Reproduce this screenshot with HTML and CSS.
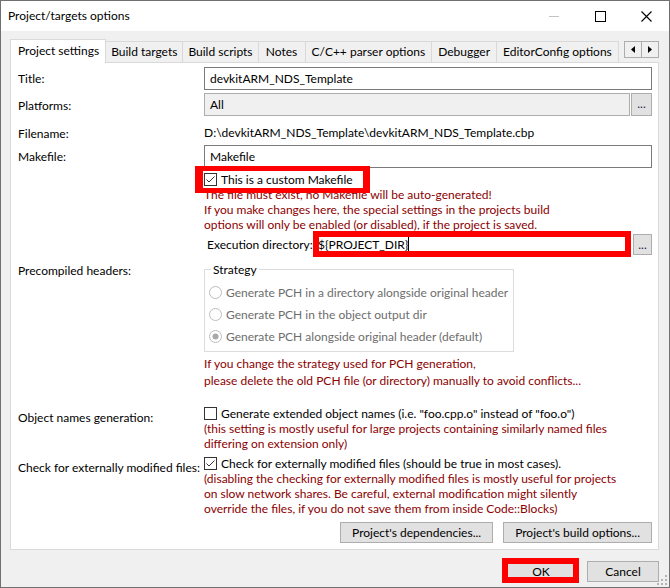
FILE: index.html
```html
<!DOCTYPE html>
<html>
<head>
<meta charset="utf-8">
<title>Project/targets options</title>
<link rel="stylesheet" href="styles.css">
</head>
<body>
<div class="window">
  <div class="titlebar">
    <span class="title">Project/targets options</span>
    <div class="caption">
      <span class="cap"><svg width="10" height="10" viewBox="0 0 10 10"><rect x="0" y="5" width="10" height="1" fill="#c4c4c4"/></svg></span>
      <span class="cap"><svg width="11" height="11" viewBox="0 0 11 11"><rect x="0.5" y="0.5" width="10" height="10" fill="none" stroke="#000"/></svg></span>
      <span class="cap"><svg width="11" height="11" viewBox="0 0 11 11"><path d="M0.5 0.5L10.5 10.5M10.5 0.5L0.5 10.5" stroke="#000" stroke-width="1.1"/></svg></span>
    </div>
  </div>

  <div class="client">
    <div class="tabs">
      <div class="tab active">Project settings</div>
      <div class="tab">Build targets</div>
      <div class="tab">Build scripts</div>
      <div class="tab">Notes</div>
      <div class="tab wide">C/C++ parser options</div>
      <div class="tab wide">Debugger</div>
      <div class="tab wide">EditorConfig options</div>
      <div class="tab-scroll">
        <span class="arrow"><svg width="4" height="7" viewBox="0 0 4 7"><path d="M4 0L0 3.5L4 7Z" fill="#000"/></svg></span>
        <span class="arrow"><svg width="4" height="7" viewBox="0 0 4 7"><path d="M0 0L4 3.5L0 7Z" fill="#000"/></svg></span>
      </div>
    </div>

    <div class="panel">
      <div class="row r1">
        <div class="lbl">Title:</div>
        <div class="input">devkitARM_NDS_Template</div>
      </div>
      <div class="row r2">
        <div class="lbl">Platforms:</div>
        <div class="combo">
          <div class="choice">All</div>
          <div class="dots">...</div>
        </div>
      </div>
      <div class="row r3">
        <div class="lbl">Filename:</div>
        <div class="static">D:\devkitARM_NDS_Template\devkitARM_NDS_Template.cbp</div>
      </div>
      <div class="row r4">
        <div class="lbl">Makefile:</div>
        <div class="input">Makefile</div>
      </div>
      <div class="row r5">
        <div class="lbl"></div>
        <div class="fld">
          <div class="check marked">
            <svg class="box" width="13" height="13" viewBox="0 0 13 13"><rect x="0.5" y="0.5" width="12" height="12" fill="#fff" stroke="#333"/><path d="M2.5 6.5L5 9L10.5 3.5" fill="none" stroke="#333"/></svg>
            <span>This is a custom Makefile</span>
            <span class="mark mark-check"></span>
          </div>
        </div>
      </div>
      <div class="row r6">
        <div class="lbl"></div>
        <div class="fld note">The file must exist, no Makefile will be auto-generated!<br>If you make changes here, the special settings in the projects build<br>options will only be enabled (or disabled), if the project is saved.</div>
      </div>
      <div class="row r7">
        <div class="lbl"></div>
        <div class="fld exec">
          <span class="exec-lbl">Execution directory:</span>
          <div class="input exec-input">${PROJECT_DIR}<span class="caret"></span><span class="mark mark-exec"></span></div>
          <div class="dots small">...</div>
        </div>
      </div>
      <div class="row r8">
        <div class="lbl top">Precompiled headers:</div>
        <div class="fld">
          <fieldset class="group">
            <legend>Strategy</legend>
            <div class="radio"><svg width="13" height="13" viewBox="0 0 13 13"><circle cx="6.5" cy="6.5" r="6" fill="#fff" stroke="#bcbcbc"/></svg><span>Generate PCH in a directory alongside original header</span></div>
            <div class="radio"><svg width="13" height="13" viewBox="0 0 13 13"><circle cx="6.5" cy="6.5" r="6" fill="#fff" stroke="#bcbcbc"/></svg><span>Generate PCH in the object output dir</span></div>
            <div class="radio"><svg width="13" height="13" viewBox="0 0 13 13"><circle cx="6.5" cy="6.5" r="6" fill="#fff" stroke="#bcbcbc"/><circle cx="6.5" cy="6.5" r="3" fill="#a8a8a8"/></svg><span>Generate PCH alongside original header (default)</span></div>
          </fieldset>
          <div class="note pch">If you change the strategy used for PCH generation,<br>please delete the old PCH file (or directory) manually to avoid conflicts...</div>
        </div>
      </div>
      <div class="row r9">
        <div class="lbl top2">Object names generation:</div>
        <div class="fld">
          <div class="check">
            <svg class="box" width="13" height="13" viewBox="0 0 13 13"><rect x="0.5" y="0.5" width="12" height="12" fill="#fff" stroke="#333"/></svg>
            <span>Generate extended object names (i.e. "foo.cpp.o" instead of "foo.o")</span>
          </div>
          <div class="note">(this setting is mostly useful for large projects containing similarly named files<br>differing on extension only)</div>
        </div>
      </div>
      <div class="row r10">
        <div class="lbl top2">Check for externally modified files:</div>
        <div class="fld">
          <div class="check">
            <svg class="box" width="13" height="13" viewBox="0 0 13 13"><rect x="0.5" y="0.5" width="12" height="12" fill="#fff" stroke="#333"/><path d="M2.5 6.5L5 9L10.5 3.5" fill="none" stroke="#333"/></svg>
            <span>Check for externally modified files (should be true in most cases).</span>
          </div>
          <div class="note">(disabling the checking for externally modified files is mostly useful for projects<br>on slow network shares. Be careful, external modification might silently<br>override the files, if you do not save them from inside Code::Blocks)</div>
        </div>
      </div>
      <div class="panel-buttons">
        <div class="btn">Project's dependencies...</div>
        <div class="btn">Project's build options...</div>
      </div>
    </div>

    <div class="footer">
      <div class="btn dlg ok">OK<span class="mark mark-ok"></span></div>
      <div class="btn dlg">Cancel</div>
    </div>
  </div>

  <svg class="grip" width="10" height="10" viewBox="0 0 10 10">
    <rect x="8" y="0" width="2" height="2" fill="#b4b4b4"/>
    <rect x="4" y="4" width="2" height="2" fill="#b4b4b4"/>
    <rect x="8" y="4" width="2" height="2" fill="#b4b4b4"/>
    <rect x="0" y="8" width="2" height="2" fill="#b4b4b4"/>
    <rect x="4" y="8" width="2" height="2" fill="#b4b4b4"/>
    <rect x="8" y="8" width="2" height="2" fill="#b4b4b4"/>
  </svg>
</div>
</body>
</html>
```

FILE: styles.css
```css
* { box-sizing: border-box; }
html, body { margin: 0; padding: 0; }
body {
  font-family: Lato, "Liberation Sans", sans-serif;
  font-size: 12px;
  color: #000;
  background: #fff;
}

.window {
  position: relative;
  width: 670px;
  height: 588px;
  border: 1px solid #707070;
  background: #f0f0f0;
  display: flex;
  flex-direction: column;
}

/* title bar */
.titlebar {
  height: 30px;
  flex: none;
  background: #fff;
  display: flex;
  align-items: center;
  padding-left: 7px;
}
.title { flex: 1; line-height: 30px; }
.caption { display: flex; height: 30px; }
.cap {
  width: 46px;
  height: 30px;
  display: flex;
  align-items: center;
  justify-content: center;
}

.client { padding: 8px 10px 0 9px; }

/* tabs */
.tabs {
  display: flex;
  align-items: flex-end;
  height: 23px;
}
.tab {
  height: 21px;
  min-width: 47px;
  line-height: 20px;
  padding: 0 5px;
  text-align: center;
  border-top: 1px solid #d9d9d9;
  border-right: 1px solid #d9d9d9;
  background: #f0f0f0;
  white-space: nowrap;
}
.tab.wide { padding: 0 6px; }
.tab.active {
  height: 24px;
  line-height: 21px;
  margin-bottom: -1px;
  padding: 0 6px 0 7px;
  background: #fff;
  border-left: 1px solid #d9d9d9;
  position: relative;
  z-index: 1;
}
.tab-scroll {
  margin-left: auto;
  align-self: flex-start;
  margin-top: 2px;
  display: flex;
}
.arrow {
  width: 18px;
  height: 17px;
  border: 1px solid #adadad;
  background: #f0f0f0;
  display: flex;
  align-items: center;
  justify-content: center;
}
.arrow + .arrow { margin-left: -1px; }

/* panel */
.panel {
  height: 488px;
  border: 1px solid #d9d9d9;
  background: #fff;
  padding: 4px 6px 0 7px;
}
.row { display: flex; }
.lbl {
  width: 186px;
  flex: none;
  display: flex;
  align-items: center;
  white-space: nowrap;
}
.lbl.top { align-items: flex-start; line-height: 17px; }
.lbl.top2 { align-items: flex-start; line-height: 15px; padding-top: 4px; }
.fld { flex: 1; min-width: 0; }

.input {
  flex: 1;
  height: 23px;
  line-height: 21px;
  border: 1px solid #7a7a7a;
  background: #fff;
  padding-left: 5px;
  white-space: nowrap;
}
.r2 { margin-top: 3px; }
.r2 .lbl { padding-top: 2px; }
.combo { flex: 1; display: flex; gap: 1px; }
.choice {
  flex: 1;
  height: 23px;
  line-height: 21px;
  border: 1px solid #adadad;
  background: #f0f0f0;
  padding-left: 5px;
}
.dots {
  width: 21px;
  height: 23px;
  border: 1px solid #adadad;
  background: #e1e1e1;
  text-align: center;
  line-height: 19px;
  color: #1a1a4a;
}
.r3 { margin-top: 6px; height: 22px; }
.r3 .lbl { padding-top: 1px; }
.static { line-height: 22px; white-space: nowrap; }
.r4 { margin-top: 1px; }
.r5 { margin-top: 3px; }

.check {
  display: flex;
  align-items: center;
  gap: 4px;
  height: 15px;
  line-height: 15px;
  white-space: nowrap;
}
.r5 .check { height: 16px; }
.marked { position: relative; width: max-content; }

.note {
  color: #8b0000;
  line-height: 15px;
  white-space: nowrap;
}

/* execution directory */
.r7 { margin-top: -2px; height: 28px; }
.exec { display: flex; align-items: center; }
.exec-lbl { width: 109px; flex: none; padding-left: 3px; white-space: nowrap; }
.exec-input { position: relative; flex: 1; padding-left: 4px; display: flex; align-items: center; }
.caret { display: inline-block; width: 1px; height: 15px; background: #000; }
.dots.small { width: 19px; height: 21px; margin-left: 2px; }

/* precompiled headers */
.r8 { margin-top: 4px; }
.group {
  width: 310px;
  height: 90px;
  margin: 0;
  border: 1px solid #dcdcdc;
  padding: 0 0 0 4px;
}
.group legend {
  padding: 0 2px;
  margin-left: 2px;
  line-height: 15px;
}
.radio {
  display: flex;
  align-items: center;
  gap: 4px;
  height: 22px;
  color: #6d6d6d;
  white-space: nowrap;
}
.group legend + .radio { margin-top: 4px; }
.note.pch { margin-top: 3px; line-height: 17px; }

.r9 { margin-top: 17px; }
.r10 { margin-top: 5px; }

/* buttons */
.panel-buttons {
  display: flex;
  justify-content: flex-end;
  gap: 10px;
  margin-top: 6px;
}
.btn {
  height: 21px;
  line-height: 19px;
  border: 1px solid #adadad;
  background: #e1e1e1;
  padding: 0 11px;
  text-align: center;
  white-space: nowrap;
}

.footer {
  display: flex;
  justify-content: flex-end;
  gap: 10px;
  margin-top: 11px;
}
.btn.dlg { width: 72px; padding: 0; }
.ok { position: relative; }

/* red annotation boxes drawn over the screenshot */
.mark { position: absolute; border: 6px solid #ff0000; pointer-events: none; }
.mark-check { left: -9px; top: -5px; width: 175px; height: 27px; border-width: 5px 7px 5px 8px; }
.mark-exec { left: -1px; right: -1px; top: -3px; bottom: -2px; }
.mark-ok { left: -4px; right: -3px; top: -4px; bottom: -2px; }

.grip { position: absolute; right: 2px; bottom: 2px; }
```
